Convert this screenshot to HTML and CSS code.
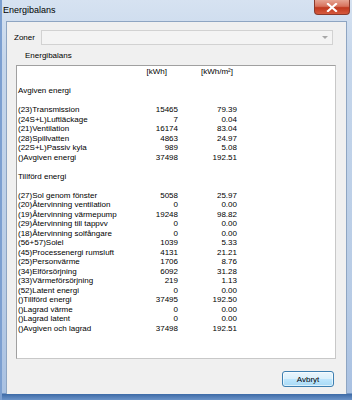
FILE: index.html
```html
<!DOCTYPE html>
<html lang="sv">
<head>
    <meta charset="UTF-8">
    <title>Energibalans</title>
<link rel="stylesheet" href="styles.css">
</head>
<body>
    <div class="window">
        <div class="titlebar">
            <span class="title">Energibalans</span>
            <div class="close-btn">
                <svg width="12" height="9" viewBox="0 0 12 9">
                    <path d="M2 1 L10 8 M10 1 L2 8" stroke="#ffffff" stroke-width="2.2" stroke-linecap="square"/>
                </svg>
            </div>
        </div>

        <div class="client">
            <div class="zone-row">
                <label class="zone-label">Zoner</label>
                <div class="combo"><span class="combo-arrow"></span></div>
            </div>

            <div class="group-label">Energibalans</div>

            <div class="report">
                <div class="grid">
                    <div></div><div class="head head-kwh">[kWh]</div><div class="head head-m2">[kWh/m²]</div>
                    <div class="blank"></div>
                    <div class="section">Avgiven energi</div>
                    <div class="blank"></div>

                    <div>(23)Transmission</div><div class="num">15465</div><div class="num">79.39</div>
                    <div>(24S+L)Luftläckage</div><div class="num">7</div><div class="num">0.04</div>
                    <div>(21)Ventilation</div><div class="num">16174</div><div class="num">83.04</div>
                    <div>(28)Spillvatten</div><div class="num">4863</div><div class="num">24.97</div>
                    <div>(22S+L)Passiv kyla</div><div class="num">989</div><div class="num">5.08</div>
                    <div>()Avgiven energi</div><div class="num">37498</div><div class="num">192.51</div>

                    <div class="blank"></div>
                    <div class="section">Tillförd energi</div>
                    <div class="blank"></div>

                    <div>(27)Sol genom fönster</div><div class="num">5058</div><div class="num">25.97</div>
                    <div>(20)Återvinning ventilation</div><div class="num">0</div><div class="num">0.00</div>
                    <div>(19)Återvinning värmepump</div><div class="num">19248</div><div class="num">98.82</div>
                    <div>(29)Återvinning till tappvv</div><div class="num">0</div><div class="num">0.00</div>
                    <div>(18)Återvinning solfångare</div><div class="num">0</div><div class="num">0.00</div>
                    <div>(56+57)Solel</div><div class="num">1039</div><div class="num">5.33</div>
                    <div>(45)Processenergi rumsluft</div><div class="num">4131</div><div class="num">21.21</div>
                    <div>(25)Personvärme</div><div class="num">1706</div><div class="num">8.76</div>
                    <div>(34)Elförsörjning</div><div class="num">6092</div><div class="num">31.28</div>
                    <div>(33)Värmeförsörjning</div><div class="num">219</div><div class="num">1.13</div>
                    <div>(52)Latent energi</div><div class="num">0</div><div class="num">0.00</div>
                    <div>()Tillförd energi</div><div class="num">37495</div><div class="num">192.50</div>
                    <div>()Lagrad värme</div><div class="num">0</div><div class="num">0.00</div>
                    <div>()Lagrad latent</div><div class="num">0</div><div class="num">0.00</div>
                    <div>()Avgiven och lagrad</div><div class="num">37498</div><div class="num">192.51</div>
                </div>
            </div>

            <div class="button-row">
                <button class="cancel-btn">Avbryt</button>
            </div>
        </div>
    </div>
</body>
</html>
```

FILE: styles.css
```css
body {
    margin: 0;
    padding: 0;
    font-family: "Liberation Sans", Arial, sans-serif;
    color: #000;
}

.window {
    width: 352px;
    height: 400px;
    box-sizing: border-box;
    display: flex;
    flex-direction: column;
    background: linear-gradient(to bottom, #d6e2f1 0, #c5d6eb 60px, #b7cbe5 300px, #a9c1e2 393px, #3d6aa6 394px, #6b93c8 400px);
    border-left: 2px solid #7c9fd0;
}

/* Title bar */
.titlebar {
    height: 21px;
    display: flex;
    align-items: flex-start;
}

.title {
    font-size: 9px;
    line-height: 21px;
    margin-left: 1px;
    color: #000;
}

.close-btn {
    margin-left: auto;
    margin-right: 2px;
    width: 36px;
    height: 15px;
    box-sizing: border-box;
    border: 1px solid #8a3a2c;
    border-top: none;
    border-radius: 0 0 4px 4px;
    background: linear-gradient(to bottom, #e6a493 0, #d7735d 45%, #c0391f 55%, #d65a3e 100%);
    display: flex;
    align-items: center;
    justify-content: center;
}

/* Client area */
.client {
    margin: 0 5px 0 4px;
    height: 373px;
    box-sizing: border-box;
    background-color: #f0f0f0;
    border: 1px solid #8ea5c2;
    border-bottom: none;
    font-size: 8px;
}

.zone-row {
    display: flex;
    align-items: center;
    padding: 8px 0 0 7px;
}

.zone-label {
    width: 27px;
    line-height: 15px;
}

.combo {
    width: 292px;
    height: 15px;
    box-sizing: border-box;
    border: 1px solid #d2d2d2;
    background-color: #f4f4f4;
    position: relative;
}

.combo-arrow {
    position: absolute;
    right: 4px;
    top: 5px;
    width: 0;
    height: 0;
    border-left: 3px solid transparent;
    border-right: 3px solid transparent;
    border-top: 3px solid #a8a8a8;
}

.group-label {
    margin: 6px 0 0 18px;
    line-height: 10px;
}

.report {
    margin: 4px 0 0 9px;
    width: 320px;
    height: 294px;
    box-sizing: border-box;
    background-color: #fff;
    border: 1px solid #a0a0a0;
    border-right-color: #c8c8c8;
    border-bottom-color: #c8c8c8;
    padding: 1px 0 0 1px;
}

.grid {
    display: grid;
    grid-template-columns: 120px 40px 59px;
    grid-auto-rows: 9.5px;
    line-height: 9.5px;
    white-space: nowrap;
}

.num {
    text-align: right;
}

.head {
    text-align: right;
}

.head-kwh {
    padding-right: 11px;
}

.head-m2 {
    padding-right: 4px;
}

.blank, .section {
    grid-column: 1 / 4;
}

.button-row {
    display: flex;
    justify-content: flex-end;
    padding: 12px 12px 0 0;
}

.cancel-btn {
    width: 52px;
    height: 16px;
    padding: 0;
    font-family: "Liberation Sans", Arial, sans-serif;
    font-size: 8px;
    color: #000;
    border: 1px solid #3c7fb1;
    border-radius: 3px;
    background: linear-gradient(to bottom, #eaf6fd 0, #d9f0fc 50%, #bee6fd 51%, #a7d9f5 100%);
    box-shadow: inset 0 0 0 1px rgba(255, 255, 255, 0.6);
}
```
